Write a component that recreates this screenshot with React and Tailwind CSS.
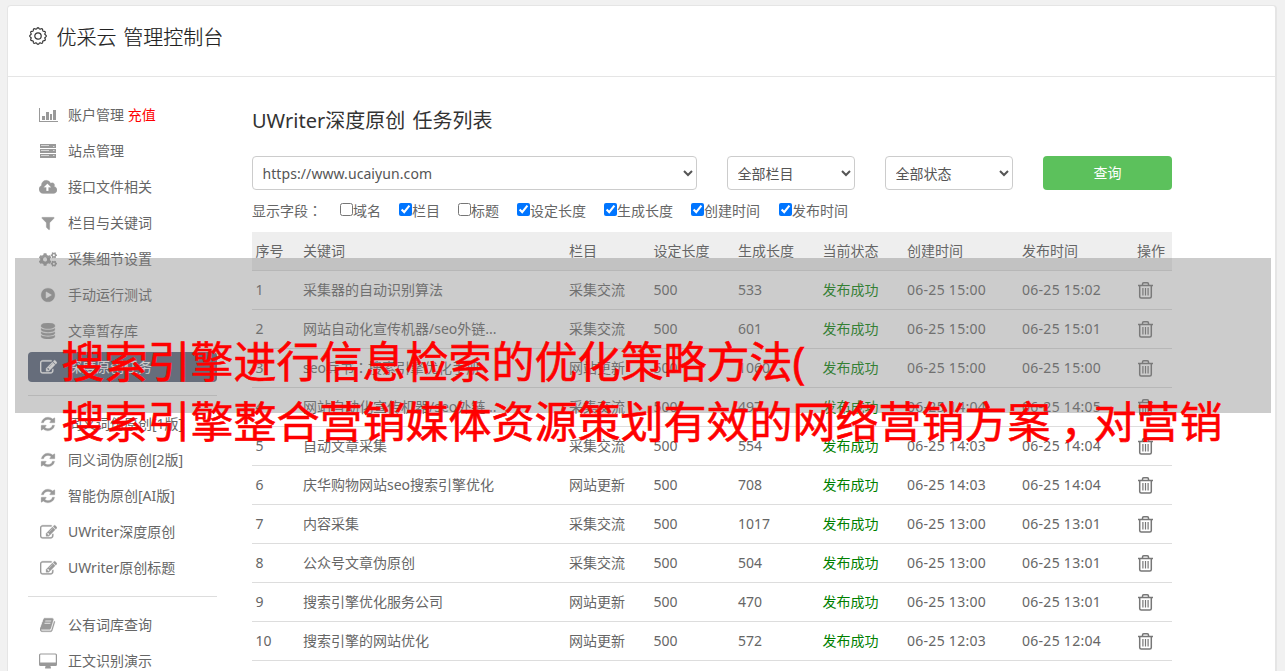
import React from "react";
import { FaCogs } from "react-icons/fa";

const P = {
  edit: "M888 1184l116-116-152-152-116 116v56h96v96h56zm440-720q-16-16-33 1l-350 350q-17 17-1 33t33-1l350-350q17-17 1-33zm80 594v190q0 119-84.5 203.5t-203.5 84.5h-832q-119 0-203.5-84.5t-84.5-203.5v-832q0-119 84.5-203.5t203.5-84.5h832q63 0 117 25 15 7 18 23 3 17-9 29l-49 49q-14 14-32 8-23-6-45-6h-832q-66 0-113 47t-47 113v832q0 66 47 113t113 47h832q66 0 113-47t47-113v-126q0-13 9-22l64-64q15-15 35-7t20 29zm-96-738l288 288-672 672h-288v-288zm444 132l-92 92-288-288 92-92q28-28 68-28t68 28l152 152q28 28 28 68t-28 68z",
  refresh: "M1639 1056q0 5-1 7-64 268-268 434.5t-478 166.5q-146 0-282.5-55t-243.5-157l-129 129q-19 19-45 19t-45-19-19-45v-448q0-26 19-45t45-19h448q26 0 45 19t19 45-19 45l-137 137q71 66 161 102t187 36q134 0 250-65t186-179q11-17 53-117 8-23 30-23h192q13 0 22.5 9.5t9.5 22.5zm25-800v448q0 26-19 45t-45 19h-448q-26 0-45-19t-19-45 19-45l138-138q-148-137-349-137-134 0-250 65t-186 179q-11 17-53 117-8 23-30 23h-199q-13 0-22.5-9.5t-9.5-22.5v-7q65-268 270-434.5t480-166.5q146 0 284 55.5t245 156.5l130-129q19-19 45-19t45 19 19 45z",
  play: "M896 128q209 0 385.5 103t279.5 279.5 103 385.5-103 385.5-279.5 279.5-385.5 103-385.5-103-279.5-279.5-103-385.5 103-385.5 279.5-279.5 385.500-103zm384 823q32-18 32-55t-32-55l-544-320q-31-19-64-1-32 19-32 56v640q0 37 32 56 16 8 32 8 17 0 32-9z",
  filter: "M1595 295q17 41-14 70l-493 493v742q0 42-39 59-13 5-25 5-27 0-45-19l-256-256q-19-19-19-45v-486l-493-493q-31-29-14-70 17-39 59-39h1280q42 0 59 39z",
  database: "M896 768q237 0 443-43t325-127v170q0 69-103 128t-280 93.5-385 34.5-385-34.5-280-93.5-103-128v-170q119 84 325 127t443 43zm0 768q237 0 443-43t325-127v170q0 69-103 128t-280 93.5-385 34.5-385-34.5-280-93.5-103-128v-170q119 84 325 127t443 43zm0-384q237 0 443-43t325-127v170q0 69-103 128t-280 93.5-385 34.5-385-34.5-280-93.5-103-128v-170q119 84 325 127t443 43zm0-1152q208 0 385 34.5t280 93.5 103 128v128q0 69-103 128t-280 93.5-385 34.5-385-34.5-280-93.5-103-128v-128q0-69 103-128t280-93.5 385-34.5z",
  cloud: "M1280 864q0-14-9-23l-352-352q-9-9-23-9t-23 9l-351 351q-10 12-10 24 0 14 9 23t23 9h224v352q0 13 9.5 22.5t22.5 9.5h192q13 0 22.5-9.5t9.5-22.5v-352h224q13 0 22.5-9.5t9.5-22.5zm640 288q0 159-112.5 271.5t-271.5 112.5h-1088q-185 0-316.5-131.5t-131.5-316.5q0-130 70-240t188-165q-2-30-2-43 0-212 150-362t362-150q156 0 285.5 87t188.5 231q71-62 166-62 106 0 181 75t75 181q0 76-41 138 130 31 213.5 135.5t83.5 238.5z",
  book: "M1639 478q40 57 18 129l-275 906q-19 64-76.5 107.5t-122.5 43.5h-923q-77 0-148.5-53.5t-99.5-131.5q-24-67-2-127 0-4 3-27t4-37q1-8-3-21.5t-3-19.5q2-11 8-21t16.5-23.5 16.5-23.5q23-38 45-91.5t30-91.5q3-10 .5-30t-.5-28q3-11 17-28t17-23q21-36 42-92t25-90q1-9-2.5-32t.5-28q4-13 22-30.5t22-22.5q19-26 42.5-84.5t27.5-96.5q1-8-3-25.5t-2-26.5q2-8 9-18t18-23 17-21q8-12 16.5-30.5t15-35 16-36 19.5-32 26.5-23.5 36-11.5 47.5 5.5l-1 3q38-9 51-9h761q74 0 114 56t18 130l-274 906q-36 119-71.5 153.5t-128.5 34.5h-869q-27 0-38 15-11 16-1 43 24 70 144 70h923q29 0 56-15.5t35-41.5l300-987q7-22 5-57 38 15 59 43zm-1064 2q-4 13 2 22.5t20 9.5h608q13 0 25.5-9.5t16.5-22.5l21-64q4-13-2-22.5t-20-9.5h-608q-13 0-25.5 9.5t-16.5 22.5zm-83 256q-4 13 2 22.5t20 9.5h608q13 0 25.5-9.5t16.5-22.5l21-64q4-13-2-22.5t-20-9.5h-608q-13 0-25.5 9.5t-16.5 22.5z",
};

function Icon({ name }) {
  if (name === "cogs") return <FaCogs className="h-[17px] w-[18px]" />;
  if (name === "chart")
    return (
      <svg className="h-4 w-[19px]" viewBox="0 0 19 16" fill="currentColor">
        <path d="M0 1h1v13h18v1H0z" />
        <path d="M3 9h3v4H3zM7 5h3v8H7zM11 7h2v6h-2zM14 3h3v10h-3z" />
      </svg>
    );
  if (name === "server")
    return (
      <svg className="h-4 w-4" viewBox="0 0 16 16" fill="currentColor">
        <path d="M0 1h16v4H0zM0 6h16v4H0zM0 11h16v4H0z" />
        <path d="M1 2.500h8M1 7.500h8M1 12.500h8M13 3.500h1.500M13 7.500h1.500M13 12.500h1.500" stroke="#fff" strokeWidth="0.600" />
      </svg>
    );
  if (name === "desktop")
    return (
      <svg className="h-4 w-[18px]" viewBox="0 0 18 16" fill="currentColor">
        <path fillRule="evenodd" d="M1.500 0.500h15q1.500 0 1.500 1.500v9.500q0 1.500-1.500 1.500H11.500q0 1 .5 1.700.3.800-.5.800h-5q-.8 0-.5-.8.5-.7.5-1.700H1.500Q0 13 0 11.500V2Q0 .5 1.500.5zM1.200 2v7.500h15.600V2q0-.4-.4-.4H1.600q-.4 0-.4.4z" />
      </svg>
    );
  return (
    <svg className={name === "cloud" ? "h-[17px] w-[18px]" : name === "edit" ? "h-[17px] w-[17px]" : "h-4 w-4"} viewBox={name === "cloud" ? "0 0 1920 1792" : "0 0 1792 1792"} fill="currentColor" stroke="currentColor" strokeWidth="30">
      <path d={P[name]} />
    </svg>
  );
}

function Gear() {
  const pts = [];
  for (let i = 0; i <= 160; i++) {
    const a = (i / 160) * Math.PI * 2;
    const r = 7.7 + 0.6 * Math.cos(a * 12);
    pts.push((9 + r * Math.cos(a)).toFixed(2) + " " + (9 + r * Math.sin(a)).toFixed(2));
  }
  return (
    <svg className="h-[18px] w-[18px]" viewBox="0 0 18 18" fill="none" stroke="#333" strokeWidth="1.200">
      <path d={"M" + pts.join("L") + "Z"} />
      <circle cx="9" cy="9" r="3.200" />
    </svg>
  );
}

function Trash() {
  return (
    <svg className="h-[17px] w-[15px]" viewBox="0 0 15 17" fill="none" stroke="#777" strokeWidth="1.500">
      <path d="M0 3.500h15M4.500 3.400V2q0-1.200 1.200-1.200h3.600q1.200 0 1.200 1.200v1.400M1.700 3.600v11q0 1.500 1.500 1.500h8.600q1.500 0 1.500-1.500v-11" />
      <path d="M4.900 6v7.500M7.500 6v7.500M10.100 6v7.500" strokeWidth="1.200" />
    </svg>
  );
}

const menu = [
  ["chart", "账户管理", "充值"],
  ["server", "站点管理"],
  ["cloud", "接口文件相关"],
  ["filter", "栏目与关键词"],
  ["cogs", "采集细节设置"],
  ["play", "手动运行测试"],
  ["database", "文章暂存库"],
  ["edit", "深度原创任务", null, true],
  null,
  ["refresh", "同义词伪原创[1版]"],
  ["refresh", "同义词伪原创[2版]"],
  ["refresh", "智能伪原创[AI版]"],
  ["edit", "UWriter深度原创"],
  ["edit", "UWriter原创标题"],
  null,
  ["book", "公有词库查询"],
  ["desktop", "正文识别演示"],
];

const fields = [
  ["域名", false, "w-[59px]"],
  ["栏目", true, "w-[59px]"],
  ["标题", false, "w-[59px]"],
  ["设定长度", true, "w-[87px]"],
  ["生成长度", true, "w-[87px]"],
  ["创建时间", true, "w-[88px]"],
  ["发布时间", true, "w-[87px]"],
];

const rows = [
  ["采集器的自动识别算法", "采集交流", "533", "06-25 15:00", "06-25 15:02"],
  ["网站自动化宣传机器/seo外链...", "采集交流", "601", "06-25 15:00", "06-25 15:01"],
  ["seo兵书：搜索引擎优化手册", "网站更新", "1060", "06-25 15:00", "06-25 15:00"],
  ["网站自动化宣传机器/seo外链...", "采集交流", "497", "06-25 14:04", "06-25 14:05"],
  ["自动文章采集", "采集交流", "554", "06-25 14:03", "06-25 14:04"],
  ["庆华购物网站seo搜索引擎优化", "网站更新", "708", "06-25 14:03", "06-25 14:04"],
  ["内容采集", "采集交流", "1017", "06-25 13:00", "06-25 13:01"],
  ["公众号文章伪原创", "采集交流", "504", "06-25 13:00", "06-25 13:01"],
  ["搜索引擎优化服务公司", "网站更新", "470", "06-25 13:00", "06-25 13:01"],
  ["搜索引擎的网站优化", "网站更新", "572", "06-25 12:03", "06-25 12:04"],
];

const cols = "grid grid-cols-[47.500px_266px_84.500px_84.500px_84.500px_84.500px_115px_115px_34px] pl-[3.500px]";

/* Full-width colon centred in its cell. */
function Colon() {
  return <span className="font-['Noto_Sans_CJK_TC',sans-serif] leading-none" lang="zh-TW">：</span>;
}

function Select({ text, className }) {
  return (
    <select defaultValue={text} className={"h-[34px] rounded border border-[#ccc] bg-white px-[5.500px] text-[14px] text-[#555] " + className}>
      <option>{text}</option>
    </select>
  );
}

export default function App() {
  return (
    <div lang="zh-CN" className="relative h-[671px] w-[1285px] overflow-hidden bg-[#f1f1f1] pl-[7px] pt-[5px] font-['Noto_Sans','Noto_Sans_CJK_SC',sans-serif] text-[14px] leading-5 text-[#666]">
      <div className="h-[690px] w-[1270px] rounded border border-r-2 border-[#e5e5e5] bg-white">
        <header className="flex h-[71px] gap-[11px] border-b border-[#e5e5e5] pl-[20.500px]">
          <div className="pt-[20.500px]"><Gear /></div>
          <h1 className="-ml-px pt-[17.500px] text-[20px] font-light leading-7 text-[#222] [word-spacing:1.500px] [-webkit-text-stroke:0.200px_#222]">优采云 管理控制台</h1>
        </header>
        <div className="flex">
          <nav className="w-[209px] shrink-0 pl-5 pt-[23px]">
            {menu.map((m, i) =>
              m ? (
                <div key={i} className={"mb-1.5 flex h-[30px] items-center rounded " + (m[3] ? "bg-[#556178] text-white" : "")}>
                  <span className={"flex w-10 justify-center " + (m[3] ? "" : "text-[#999]")}><Icon name={m[0]} /></span>
                  <span className="whitespace-nowrap">{m[1]}{m[2] && <span className="text-[#f00]"> {m[2]}</span>}</span>
                </div>
              ) : (
                <div key={i} className="mb-3 mt-[14px] h-px -translate-y-px bg-[#ddd]" />
              )
            )}
          </nav>
          <main className="ml-[35px] w-[920px] pt-[30px]">
            <h2 className="text-[20px] font-normal leading-7 text-[#333] [word-spacing:2px]">UWriter深度原创 任务列表</h2>
            <div className="mt-[21px] flex gap-[30px]">
              <Select text="https://www.ucaiyun.com" className="w-[445px] tracking-[0.080px]" />
              <Select text="全部栏目" className="w-[128px]" />
              <Select text="全部状态" className="w-[128px]" />
              <button className="h-[34px] w-[129px] rounded bg-[#5cc15c] text-white">查询</button>
            </div>
            <div className="mt-[11px] flex h-5">
              <span className="w-[88px]">显示字段<Colon /></span>
              {fields.map(([t, c, w]) => (
                <label key={t} className={"flex " + w}>
                  <input type="checkbox" defaultChecked={c} className="mt-[2px] h-[13px] w-[13px]" />
                  <span className="whitespace-nowrap">{t}</span>
                </label>
              ))}
            </div>
            <section className="mt-[11px]">
              <div className={cols + " h-[39px] border-b border-[#ddd] bg-[#eee] pt-[9px]"}>
                {["序号", "关键词", "栏目", "设定长度", "生成长度", "当前状态", "创建时间", "发布时间", "操作"].map((h) => (
                  <span key={h} className="whitespace-nowrap">{h}</span>
                ))}
              </div>
              {rows.map((r, i) => (
                <div key={i} className={cols + " h-[39px] border-b border-[#ddd] pt-[9px]"}>
                  <span>{i + 1}</span>
                  <span>{r[0].split("：").map((part, j) => (
                    <React.Fragment key={j}>{j > 0 && <Colon />}{part}</React.Fragment>
                  ))}</span>
                  <span>{r[1]}</span>
                  <span>500</span>
                  <span>{r[2]}</span>
                  <span className="text-[#008000]">发布成功</span>
                  <span className="tracking-[0.280px]">{r[3]}</span>
                  <span className="tracking-[0.280px]">{r[4]}</span>
                  <span className="pt-[2px] pl-[0.500px]"><Trash /></span>
                </div>
              ))}
            </section>
          </main>
        </div>
      </div>
      <div className="absolute left-[15px] top-[258px] h-[155px] w-[1256px] bg-[rgba(128,128,128,0.4)]" />
      <div className="absolute left-[61.500px] top-[332px] whitespace-nowrap text-[43px] leading-[60px] text-[#f00] [-webkit-text-stroke:0.600px_#f00]">
        <div>搜索引擎进行信息检索的优化策略方法(</div>
        <div>搜索引擎整合营销媒体资源策划有效的网络营销方案<span className="inline-block w-[43px] pl-[10px]">，</span>对营销</div>
      </div>
    </div>
  );
}
